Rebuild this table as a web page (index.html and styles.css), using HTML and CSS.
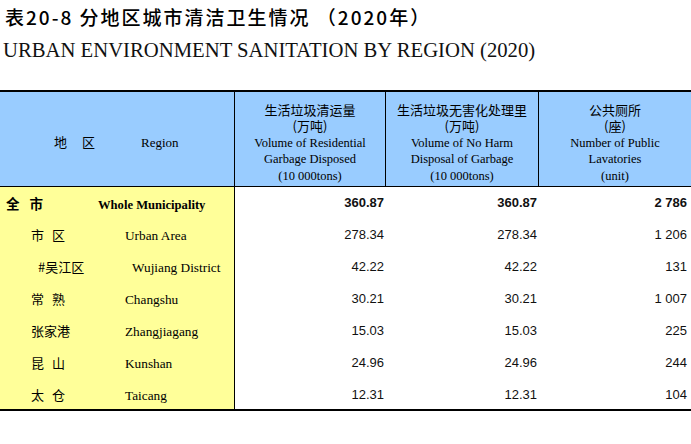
FILE: index.html
```html
<!DOCTYPE html>
<html lang="zh-CN">
<head>
<meta charset="utf-8">
<title>表20-8 分地区城市清洁卫生情况</title>
<link rel="stylesheet" href="styles.css">
</head>
<body>
<h1 class="title-cn">表20-8 分地区城市清洁卫生情况 （2020年）</h1>
<h2 class="title-en">URBAN ENVIRONMENT SANITATION BY REGION (2020)</h2>
<table class="stats">
  <colgroup>
    <col class="c1"><col class="c2"><col class="c3"><col class="c4">
  </colgroup>
  <thead>
    <tr>
      <th class="region-head"><span class="cn">地 区</span><span class="en">Region</span></th>
      <th class="col-head"><div class="hcn">生活垃圾清运量</div><div class="hcn">(万吨)</div><div class="hen">Volume of Residential</div><div class="hen">Garbage Disposed</div><div class="hen">(10 000tons)</div></th>
      <th class="col-head"><div class="hcn">生活垃圾无害化处理里</div><div class="hcn">(万吨)</div><div class="hen">Volume of No Harm</div><div class="hen">Disposal of Garbage</div><div class="hen">(10 000tons)</div></th>
      <th class="col-head last"><div class="hcn">公共厕所</div><div class="hcn">(座)</div><div class="hen">Number of Public</div><div class="hen">Lavatories</div><div class="hen">(unit)</div></th>
    </tr>
  </thead>
  <tbody>
    <tr class="total">
      <td class="region"><span class="cn">全 市</span><span class="en">Whole Municipality</span></td>
      <td class="num">360.87</td><td class="num">360.87</td><td class="num last">2 786</td>
    </tr>
    <tr>
      <td class="region"><span class="cn">市 区</span><span class="en">Urban Area</span></td>
      <td class="num">278.34</td><td class="num">278.34</td><td class="num last">1 206</td>
    </tr>
    <tr class="sub">
      <td class="region"><span class="cn">#吴江区</span><span class="en">Wujiang District</span></td>
      <td class="num">42.22</td><td class="num">42.22</td><td class="num last">131</td>
    </tr>
    <tr>
      <td class="region"><span class="cn">常 熟</span><span class="en">Changshu</span></td>
      <td class="num">30.21</td><td class="num">30.21</td><td class="num last">1 007</td>
    </tr>
    <tr>
      <td class="region"><span class="cn">张家港</span><span class="en">Zhangjiagang</span></td>
      <td class="num">15.03</td><td class="num">15.03</td><td class="num last">225</td>
    </tr>
    <tr>
      <td class="region"><span class="cn">昆 山</span><span class="en">Kunshan</span></td>
      <td class="num">24.96</td><td class="num">24.96</td><td class="num last">244</td>
    </tr>
    <tr>
      <td class="region"><span class="cn">太 仓</span><span class="en">Taicang</span></td>
      <td class="num">12.31</td><td class="num">12.31</td><td class="num last">104</td>
    </tr>
  </tbody>
</table>
</body>
</html>
```

FILE: styles.css
```css
html, body {
  margin: 0;
  padding: 0;
  background: #ffffff;
}

body {
  width: 691px;
  height: 444px;
  overflow: hidden;
  color: #000000;
}

.title-cn {
  margin: 0;
  padding: 4px 0 0 5px;
  font-family: "Noto Sans CJK SC", sans-serif;
  font-weight: 500;
  font-size: 19px;
  letter-spacing: 2px;
  line-height: 26px;
  white-space: pre;
}

.title-en {
  margin: 8px 0 0 3px;
  font-family: "Liberation Serif", serif;
  font-weight: normal;
  font-size: 20.7px;
  line-height: 24px;
  color: #111111;
  white-space: nowrap;
}

.stats {
  margin-top: 28px;
  width: 691px;
  table-layout: fixed;
  border-collapse: separate;
  border-spacing: 0;
  border-top: 2px solid #000;
  border-bottom: 2px solid #000;
}

.c1 { width: 235px; }
.c2 { width: 151px; }
.c3 { width: 153px; }
.c4 { width: 152px; }

.stats th {
  background: #99ccff;
  height: 95px;
  padding: 0;
  border-right: 1px solid #000;
  border-bottom: 1px solid #000;
  font-weight: normal;
  box-sizing: border-box;
}

.stats th.last {
  border-right: none;
}

.col-head {
  vertical-align: top;
  padding-top: 10px !important;
  line-height: 16.4px;
  text-align: center;
  white-space: nowrap;
}

.hcn {
  font-family: "Noto Sans CJK SC", sans-serif;
  font-size: 13px;
}

.hen {
  font-family: "Liberation Serif", serif;
  font-size: 12.5px;
}

.region-head {
  text-align: left;
  vertical-align: middle;
  padding: 4px 0 0 54px !important;
  white-space: nowrap;
}

.region-head .cn {
  display: inline-block;
  width: 87px;
  font-family: "Noto Sans CJK SC", sans-serif;
  font-size: 13px;
  word-spacing: 12px;
}

.region-head .en {
  font-family: "Liberation Serif", serif;
  font-size: 13px;
}

.stats td {
  height: 32px;
  padding: 0 0 1px 0;
  vertical-align: middle;
  box-sizing: border-box;
}

.stats tbody tr:last-child td {
  height: 30px;
  padding-bottom: 0;
}

.region {
  background: #ffff99;
  border-right: 1px solid #000;
  padding-left: 31px !important;
  white-space: nowrap;
}

.region .cn {
  display: inline-block;
  width: 94px;
  font-family: "Noto Sans CJK SC", sans-serif;
  font-size: 13px;
  word-spacing: 5px;
}

.region .en {
  font-family: "Liberation Serif", serif;
  font-size: 13.3px;
}

.total .region {
  padding-left: 6px !important;
}

.total .region .cn {
  width: 92px;
  font-weight: bold;
  font-size: 13.5px;
  word-spacing: 7px;
}

.total .region .en {
  font-weight: bold;
  font-size: 12.6px;
}

.sub .region {
  padding-left: 38px !important;
}

.num {
  text-align: right;
  padding-right: 2px !important;
  font-family: "Liberation Sans", Arial, sans-serif;
  font-size: 13px;
  color: #111111;
}

.num.last {
  padding-right: 4px !important;
}

.total .num {
  font-weight: bold;
}
```
